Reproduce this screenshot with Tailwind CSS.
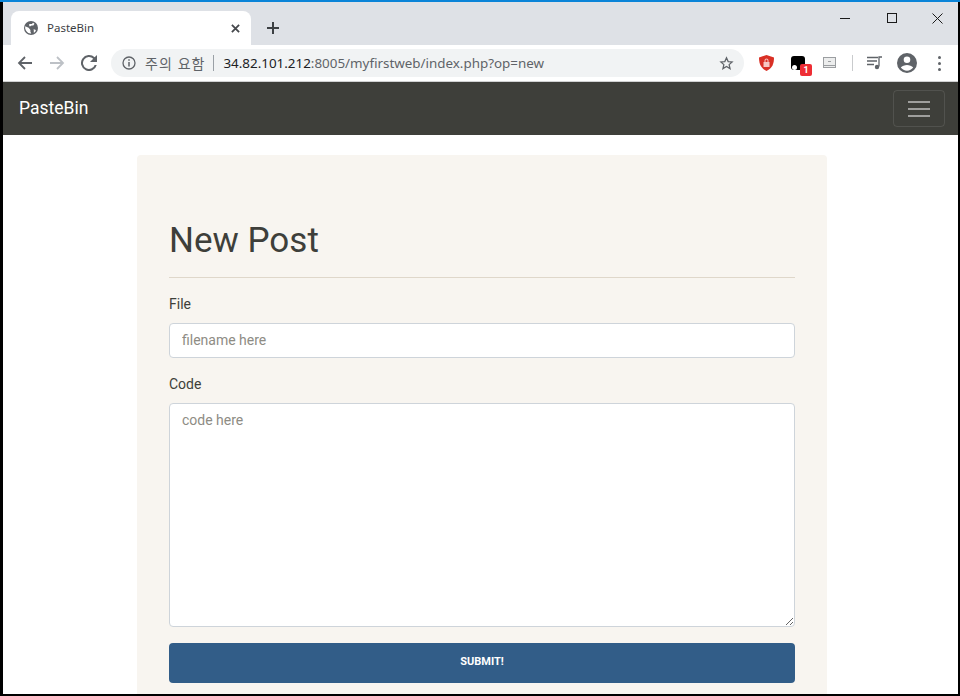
<!DOCTYPE html>
<html lang="ko">
<head>
  <meta charset="UTF-8">
  <title>PasteBin</title>
  <script src="https://cdn.jsdelivr.net/npm/@tailwindcss/browser@4"></script>
</head>
<body class="h-[696px] w-[960px] overflow-hidden bg-black font-['Roboto',sans-serif]">
  <div class="flex h-[694px] flex-col overflow-hidden border-t-2 border-t-[#0a84d8] pl-[3px] pr-[2px]">

    <!-- tab strip -->
    <div class="flex h-[43px] shrink-0 items-end bg-[#dee1e6] pl-2">
      <div class="flex h-[34px] w-[240px] items-center rounded-t-lg bg-white pl-[13px] pr-[11px]">
        <svg class="h-[14px] w-[14px]" viewBox="0 0 24 24"><circle cx="12" cy="12" r="12" fill="#5f6368"/><path fill="#fff" d="M2 9l6 2.500 3 4v3l1.500 3h-2C6 21 3 17.500 2 13zM9 5h4.500l2-2 2.500 1.500-2 3h-3L11 9H9zM16 14.500h3l1.500 2-2.500 3h-1.500l.5-3z"/></svg>
        <span class="ml-[9px] font-['Noto_Sans',sans-serif] text-[11.500px] text-[#3c4043]">PasteBin</span>
        <svg class="ml-auto h-[9px] w-[9px] text-[#45484c]" viewBox="0 0 10 10" fill="none" stroke="currentColor" stroke-width="2"><path d="M1 1l8 8M9 1l-8 8"/></svg>
      </div>
      <svg class="mb-[11px] ml-4 h-3 w-3 text-[#3c4043]" viewBox="0 0 12 12" fill="none" stroke="currentColor" stroke-width="2"><path d="M6 0v12M0 6h12"/></svg>
      <div class="mb-[15px] ml-auto flex h-6 items-center text-[#1a1a1a]">
        <svg class="h-[10px] w-[10px]" viewBox="0 0 10 10" stroke="currentColor" fill="none"><path d="M0 5.500h10"/></svg>
        <svg class="ml-[37px] h-[10px] w-[10px]" viewBox="0 0 10 10" stroke="currentColor" fill="none"><rect x=".5" y=".5" width="9" height="9"/></svg>
        <svg class="ml-[35px] mr-[15px] h-[11px] w-[11px]" viewBox="0 0 11 11" stroke="currentColor" fill="none"><path d="M.5.500l10 10M10.500.500l-10 10"/></svg>
      </div>
    </div>

    <!-- toolbar -->
    <div class="flex h-[37px] shrink-0 items-center border-b border-b-[#d0d1d2] bg-white pl-[14px]">
      <svg class="h-4 w-4 text-[#5f6368]" viewBox="0 0 16 16" fill="none" stroke="currentColor" stroke-width="1.800"><path d="M15 8H2M8 2L2 8l6 6"/></svg>
      <svg class="ml-4 h-4 w-4 text-[#bdc1c6]" viewBox="0 0 16 16" fill="none" stroke="currentColor" stroke-width="1.800"><path d="M1 8h13M8 2l6 6-6 6"/></svg>
      <svg class="ml-4 h-4 w-4 text-[#5f6368]" viewBox="0 0 16 16" fill="currentColor"><path d="M13.650 2.350A8 8 0 1 0 15.740 10h-2.080a6 6 0 1 1-1.420-6.240L9 7h7V0z"/></svg>
      <div class="ml-[14px] flex h-7 w-[633px] items-center rounded-full bg-[#f1f3f4] pl-[11px] pr-[10px]">
        <svg class="h-[14px] w-[14px] text-[#5f6368]" viewBox="0 0 14 14" fill="none" stroke="currentColor" stroke-width="1.300"><circle cx="7" cy="7" r="6"/><path stroke-width="1.500" d="M7 6v4.500M7 3.200v1.600"/></svg>
        <span class="ml-[9px] font-['Noto_Sans_CJK_KR',sans-serif] text-sm tracking-[1px] text-[#5f6368]">주의 요함</span>
        <span class="ml-2 h-4 w-px bg-[#9aa0a6]"></span>
        <span class="ml-[9px] font-['Noto_Sans',sans-serif] text-[13.400px] text-[#5f6368]"><span class="text-[#202124]">34.82.101.212</span>:8005/myfirstweb/index.php?op=new</span>
        <svg class="ml-auto h-[15px] w-[15px] text-[#5f6368]" viewBox="0 0 24 24" fill="none" stroke="currentColor" stroke-width="2"><path d="M12 3l2.700 6 6.300.6-4.800 4.200 1.500 6.400-5.700-3.400-5.700 3.400 1.500-6.400L3 9.600 9.300 9z"/></svg>
      </div>
      <svg class="ml-[15px] h-4 w-[15px]" viewBox="0 0 15 16"><path fill="#d93025" d="M7.500 0L15 2.500c0 6-1.500 10.500-7.500 13.500C1.500 13 0 8.500 0 2.500z"/><path fill="#f7c6c1" d="M4.500 7h6v5h-6zM5.500 7V5.500a2 2 0 0 1 4 0V7H8.500V5.500a1 1 0 0 0-2 0V7z"/></svg>
      <div class="relative ml-[17px] h-[14px] w-[14px] rounded-[3px] bg-black">
        <span class="absolute bottom-0 left-[1px] h-[5px] w-[5px] rounded-full bg-white"></span>
        <span class="absolute -bottom-[6px] left-[9px] flex h-3 w-3 items-center justify-center rounded-[2px] bg-[#ee2d34] text-[9px] font-bold leading-none text-white">1</span>
      </div>
      <svg class="ml-[18px] h-3 w-[13px] text-[#9b9ea1]" viewBox="0 0 13 12" fill="none" stroke="currentColor"><rect x=".5" y=".5" width="12" height="10" fill="#eceded"/><path d="M1 8.500h11M5 4.500h3"/></svg>
      <span class="ml-[16px] h-4 w-px bg-[#c9cbcd]"></span>
      <svg class="ml-[14px] h-[14px] w-4 text-[#5f6368]" viewBox="0 0 16 14" fill="none" stroke="currentColor" stroke-width="1.300"><path d="M0 1.500h11M0 5h10M0 8.500h7M12 10.500V1h3"/><circle cx="10" cy="11" r="2.200" fill="currentColor" stroke="none"/></svg>
      <svg class="ml-[14px] h-5 w-5 text-[#5f6368]" viewBox="0 0 20 20" fill="currentColor"><path d="M10 0a10 10 0 1 0 0 20 10 10 0 0 0 0-20zm0 3.500a3.300 3.300 0 1 1 0 6.600 3.300 3.300 0 0 1 0-6.600zm0 14.200a7.800 7.800 0 0 1-6.200-3.100c1.200-1.800 4-2.700 6.200-2.700s5 .9 6.200 2.700a7.800 7.800 0 0 1-6.200 3.100z"/></svg>
      <div class="ml-[21px] flex flex-col gap-[3px]">
        <span class="h-[3px] w-[3px] rounded-full bg-[#5f6368]"></span>
        <span class="h-[3px] w-[3px] rounded-full bg-[#5f6368]"></span>
        <span class="h-[3px] w-[3px] rounded-full bg-[#5f6368]"></span>
      </div>
    </div>

    <!-- page -->
    <div class="flex-1 overflow-hidden bg-white">
      <nav class="flex h-[53px] items-center justify-between bg-[#3e3f3a] pl-4 pr-[13px]">
        <a class="text-[17.500px] leading-none text-white">PasteBin</a>
        <button class="flex h-[37px] w-[52px] flex-col items-center justify-center gap-[5px] rounded border border-white/10">
          <span class="h-[2px] w-[22px] bg-white/50"></span>
          <span class="h-[2px] w-[22px] bg-white/50"></span>
          <span class="h-[2px] w-[22px] bg-white/50"></span>
        </button>
      </nav>

      <main class="ml-[134px] mt-5 w-[690px] rounded-t bg-[#f8f5f0] px-8 pb-4 pt-[63px] text-[#3e3f3a]">
        <h1 class="text-[35px] font-normal leading-[45px]">New Post</h1>
        <hr class="mt-[14px] border-[#dfd7ca]">
        <form>
          <label for="file" class="mt-[18px] block text-sm leading-[17px]">File</label>
          <input id="file" type="text" placeholder="filename here" class="mt-[10px] block h-[35px] w-full rounded border border-[#ced4da] bg-white px-3 pb-[2px] text-sm outline-none placeholder:text-[#8e8c84]">
          <label for="code" class="mt-[18px] block text-sm leading-[17px]">Code</label>
          <textarea id="code" placeholder="code here" class="mt-[10px] block h-[224px] w-full rounded border border-[#ced4da] bg-white px-3 py-[6px] text-sm outline-none placeholder:text-[#8e8c84]"></textarea>
          <button type="button" class="mt-4 block h-10 w-full rounded bg-[#325d88] pb-[2px] text-[11px] font-bold uppercase text-white">Submit!</button>
        </form>
      </main>
    </div>
  </div>
</body>
</html>
